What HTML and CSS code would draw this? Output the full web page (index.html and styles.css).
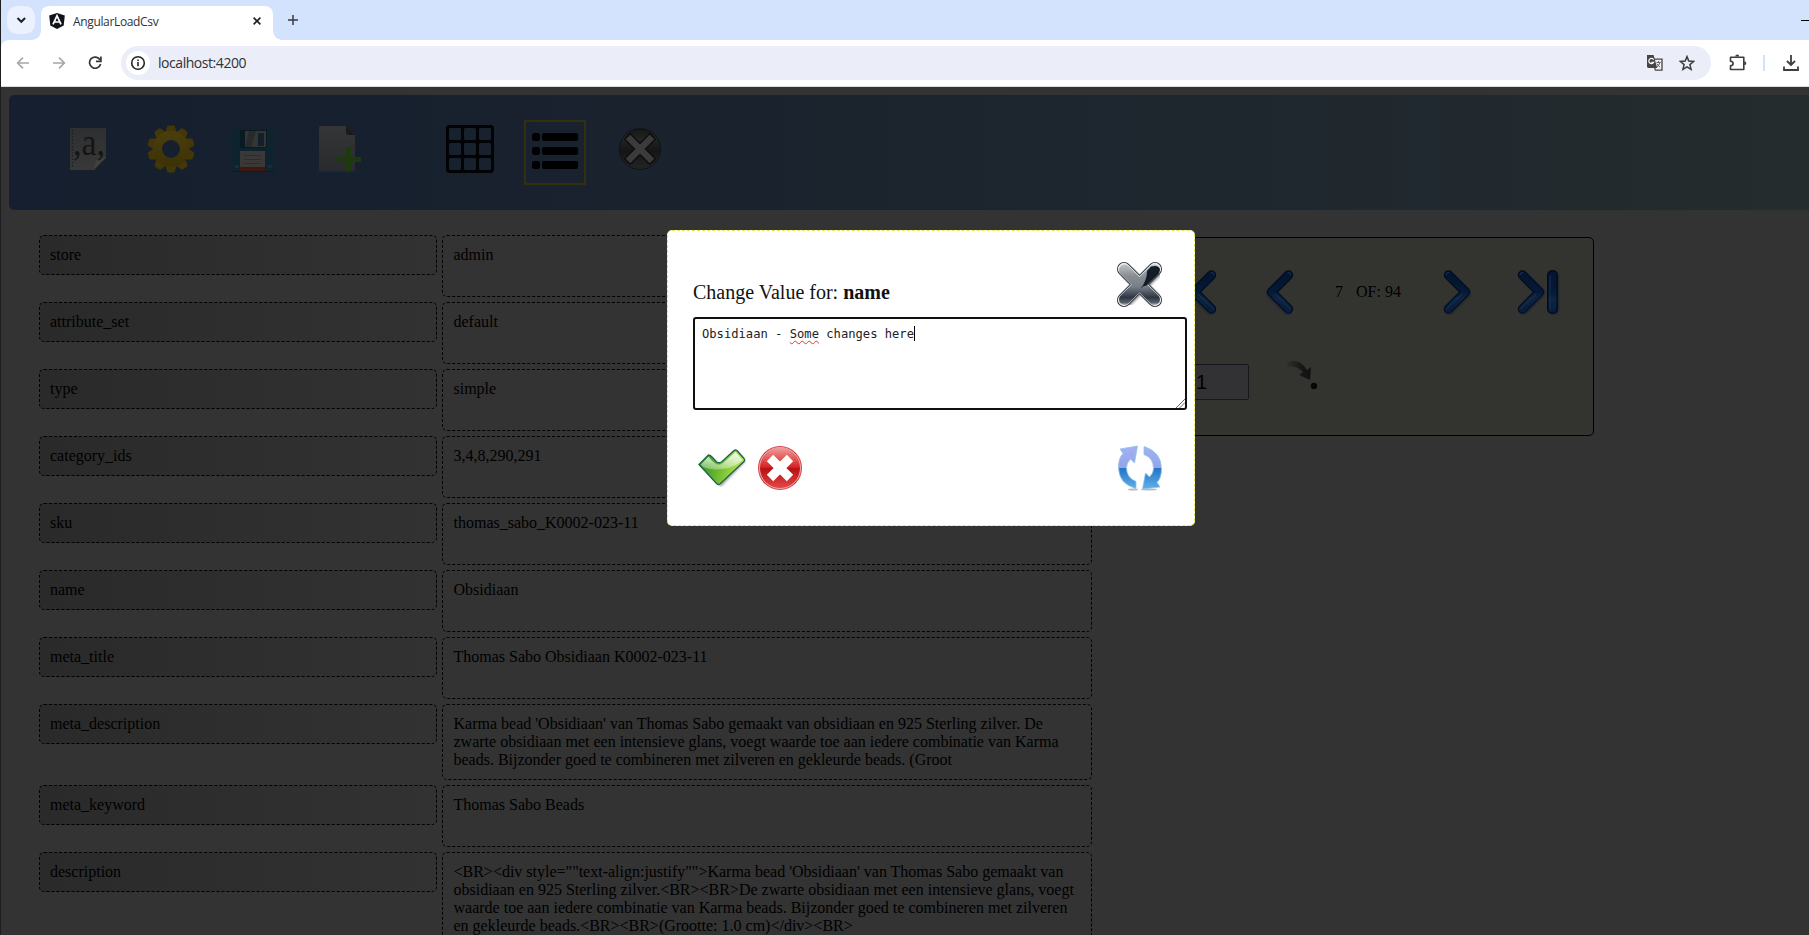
FILE: index.html
```html
<!DOCTYPE html>
<html lang="en">
<head>
<meta charset="utf-8">
<title>AngularLoadCsv</title>
<link rel="stylesheet" href="styles.css">
</head>
<body>
<div class="browser">
  <div class="tabstrip">
    <div class="tab-search"><svg width="28" height="28" viewBox="0 0 28 28"><path d="M10.500 12l3.800 3.800 3.800-3.800" fill="none" stroke="#1f2022" stroke-width="2"/></svg></div>
    <div class="tab">
      <svg class="favicon" width="16" height="16" viewBox="0 0 16 16"><path d="M8 0L15.800 2.400 14.700 12.500 8 16 1.300 12.500 .2 2.400z" fill="#10131c"/><path d="M4 11.400L8 2.800l4 8.600M5.600 9h4.800" fill="none" stroke="#fff" stroke-width="1.700"/></svg>
      <span class="tab-title">AngularLoadCsv</span>
      <svg class="tab-close" width="8" height="8" viewBox="0 0 8 8"><path d="M.6.6l6.800 6.800M7.400.6L.6 7.400" stroke="#1f2022" stroke-width="1.600"/></svg>
    </div>
    <svg class="new-tab" width="10" height="10" viewBox="0 0 10 10"><path d="M5 0v10M0 5h10" stroke="#3a3c40" stroke-width="1.500"/></svg>
    <div class="minimize"></div>
  </div>
  <div class="toolbar">
    <svg class="nav-back" width="14" height="14" viewBox="0 0 14 14"><path d="M13 7H2M7 1.600L1.600 7 7 12.400" fill="none" stroke="#a6a7a9" stroke-width="1.600"/></svg>
    <svg class="nav-fwd" width="14" height="14" viewBox="0 0 14 14"><path d="M1 7h11M7 1.600L12.400 7 7 12.400" fill="none" stroke="#a6a7a9" stroke-width="1.600"/></svg>
    <svg class="nav-reload" width="14" height="14" viewBox="0 0 14 14"><path d="M12 3.800A5.600 5.600 0 1 0 12.600 8" fill="none" stroke="#333538" stroke-width="1.700"/><path d="M12.900.4v5H8" fill="none" stroke="#333538" stroke-width="1.700"/></svg>
    <div class="omnibox">
      <span class="site-info"><svg width="16" height="16" viewBox="0 0 16 16"><circle cx="8" cy="8" r="6.300" fill="none" stroke="#252629" stroke-width="1.600"/><path d="M8 7v4.200M8 4.400v1.700" stroke="#252629" stroke-width="1.600"/></svg></span>
      <span class="url">localhost:4200</span>
      <svg class="translate" width="18" height="18" viewBox="0 0 18 18"><path d="M6 5.200h10v11H9.400z" fill="#f3f4fa" stroke="#444" stroke-width="1.300"/><path d="M1 1h6.600l3.600 13H2.400Q1 14 1 12.600z" fill="#444"/><path d="M7.600 5.600A2.600 2.600 0 1 0 7.700 8.300H5.400" fill="none" stroke="#fff" stroke-width="1.200"/><path d="M10.400 8.400h4.400M12.500 7v1.400M14 8.600q-1 3-3.200 4.400M11 9.600q1 2.400 3 3.600" fill="none" stroke="#555" stroke-width=".9"/></svg>
      <svg class="star" width="16" height="16" viewBox="0 0 16 16"><path d="M8 1.600l1.800 4.500 4.800.4-3.700 3.100 1.200 4.700L8 11.800l-4.100 2.500 1.200-4.700L1.400 6.500l4.800-.4z" fill="none" stroke="#3c3d40" stroke-width="1.500"/></svg>
    </div>
    <svg class="puzzle" width="18" height="18" viewBox="0 0 18 18"><path d="M1.500 3.200h13.300v12.300H1.500v-3.800q2.600-.3 2.600-2.300T1.500 7.200z" fill="none" stroke="#3c3d40" stroke-width="1.600" stroke-linejoin="round"/><path d="M6.200 2.600a2 2 0 0 1 4 0zM15.300 7.300a2 2 0 0 1 0 4z" fill="#3c3d40"/></svg>
    <span class="divider"></span>
    <svg class="download" width="16" height="16" viewBox="0 0 16 16"><path d="M8 0v10M4 6l4 4 4-4M1 11.500V15h14v-3.500" fill="none" stroke="#3c3d40" stroke-width="1.800"/></svg>
  </div>
</div>

<div class="app">
  <div class="header">
    <svg class="ic-csv" width="38" height="44" viewBox="0 0 38 44"><defs><linearGradient id="paper" x2="0" y2="1"><stop stop-color="#2d2f31"/><stop offset="1" stop-color="#383837"/></linearGradient></defs><path d="M1 1h36v30L25 43H1z" fill="url(#paper)"/><path d="M37 30q-7 2-10 3-1 5-3 10z" fill="#41413e"/><path d="M3.500 3v38" stroke="#171b20" stroke-width="1.200" stroke-dasharray="1.200 2"/><text x="4" y="28" textLength="32" lengthAdjust="spacingAndGlyphs" class="csv-glyph">,a,</text></svg>
    <svg class="ic-gear" width="48" height="48" viewBox="-24 -24 48 48"><defs><linearGradient id="gear" x2="0" y2="1"><stop stop-color="#4a3d0c"/><stop offset="1" stop-color="#3e3306"/></linearGradient><path id="tooth" d="M-5.500-17L-3.800-22.600q.4-1 1.400-1H2.400q1 0 1.400 1L5.500-17z"/></defs><g fill="#433708"><use href="#tooth"/><use href="#tooth" transform="rotate(36)"/><use href="#tooth" transform="rotate(72)"/><use href="#tooth" transform="rotate(108)"/><use href="#tooth" transform="rotate(144)"/><use href="#tooth" transform="rotate(180)"/><use href="#tooth" transform="rotate(216)"/><use href="#tooth" transform="rotate(252)"/><use href="#tooth" transform="rotate(288)"/><use href="#tooth" transform="rotate(324)"/></g><circle r="13.500" fill="none" stroke="url(#gear)" stroke-width="9"/></svg>
    <svg class="ic-save" width="42" height="42" viewBox="0 0 42 42"><path d="M1 0h37l4 4v36q0 2-2 2H2q-2 0-2-2V2q0-2 1-2z" fill="#0d232d"/><path d="M8 0h27v18H8z" fill="#0a1a22"/><path d="M13 1h21v16H13z" fill="#343536"/><path d="M17 1h7l-5 16h-6z" fill="#282a2b"/><path d="M26 3h6v13h-6z" fill="#12202a"/><path d="M8 21h25v20H8z" fill="#3b3938"/><path d="M8 37h25v4H8z" fill="#3e1710"/><path d="M12 25.500h17M12 29.500h17M12 33.500h17" stroke="#35241f" stroke-width=".8"/><path d="M3 35h4v3H3zM36 35h4v3h-4z" fill="#172e37"/><path d="M0 41.500h42" stroke="#0a1c24"/></svg>
    <svg class="ic-new" width="46" height="48" viewBox="0 0 46 48"><defs><linearGradient id="sheet" x2="0" y2="1"><stop stop-color="#343536"/><stop offset="1" stop-color="#292b2d"/></linearGradient></defs><ellipse cx="20" cy="46" rx="21" ry="1.500" fill="#202833"/><path d="M4 1h25l9 9v35H2V3q0-2 2-2z" fill="url(#sheet)"/><path d="M29 1l9 9h-6q-3 0-3-3z" fill="#1a1a1b"/><path d="M29 22h5v10h10v5H34v9h-5v-9H19v-5h10z" fill="#1c3a0c"/></svg>
    <svg class="ic-grid" width="48" height="48" viewBox="0 0 48 48"><path fill-rule="evenodd" fill="#020304" d="M2 0h44l2 2v44l-2 2H2l-2-2V2zM4 3h10l1 1v10l-1 1H4l-1-1V4zM19 3h10l1 1v10l-1 1H19l-1-1V4zM34 3h10l1 1v10l-1 1H34l-1-1V4zM4 18h10l1 1v10l-1 1H4l-1-1V19zM19 18h10l1 1v10l-1 1H19l-1-1V19zM34 18h10l1 1v10l-1 1H34l-1-1V19zM4 33h10l1 1v10l-1 1H4l-1-1V34zM19 33h10l1 1v10l-1 1H19l-1-1V34zM34 33h10l1 1v10l-1 1H34l-1-1V34z"/></svg>
    <div class="list-toggle"><svg width="46" height="36" viewBox="0 0 46 36"><rect width="8" height="8" rx="2.500"/><rect y="14" width="8" height="8" rx="2.500"/><rect y="28" width="8" height="8" rx="2.500"/><rect x="10" width="36" height="8" rx="2"/><rect x="10" y="14" width="36" height="8" rx="2"/><rect x="10" y="28" width="36" height="8" rx="2"/></svg></div>
    <svg class="ic-close" width="42" height="42" viewBox="-21 -21 42 42"><defs><linearGradient id="disc" x2="0" y2="1"><stop stop-color="#121517"/><stop offset=".25" stop-color="#242424"/><stop offset=".55" stop-color="#151515"/><stop offset="1" stop-color="#242526"/></linearGradient></defs><circle r="20.500" fill="url(#disc)" stroke="#101416"/><g stroke="#0c0c0c" stroke-width="9"><path d="M-13-13L13 13M13-13L-13 13"/></g><path d="M-12-12L12 12M12-12L-12 12" stroke="#3b3b3b" stroke-width="6.600"/></svg>
  </div>

  <div class="content">
    <div class="rows">
      <div class="label">store</div><div class="value">admin</div>
      <div class="label">attribute_set</div><div class="value">default</div>
      <div class="label">type</div><div class="value">simple</div>
      <div class="label">category_ids</div><div class="value">3,4,8,290,291</div>
      <div class="label">sku</div><div class="value">thomas_sabo_K0002-023-11</div>
      <div class="label">name</div><div class="value">Obsidiaan</div>
      <div class="label">meta_title</div><div class="value">Thomas Sabo Obsidiaan K0002-023-11</div>
      <div class="label">meta_description</div><div class="value">Karma bead 'Obsidiaan' van Thomas Sabo gemaakt van obsidiaan en 925 Sterling zilver. De zwarte obsidiaan met een intensieve glans, voegt waarde toe aan iedere combinatie van Karma beads. Bijzonder goed te combineren met zilveren en gekleurde beads. (Groot</div>
      <div class="label">meta_keyword</div><div class="value">Thomas Sabo Beads</div>
      <div class="label">description</div><div class="value">&lt;BR&gt;&lt;div style=""text-align:justify""&gt;Karma bead 'Obsidiaan' van Thomas Sabo gemaakt van obsidiaan en 925 Sterling zilver.&lt;BR&gt;&lt;BR&gt;De zwarte obsidiaan met een intensieve glans, voegt waarde toe aan iedere combinatie van Karma beads. Bijzonder goed te combineren met zilveren en gekleurde beads.&lt;BR&gt;&lt;BR&gt;(Grootte: 1.0 cm)&lt;/div&gt;&lt;BR&gt;</div>
    </div>

    <div class="pager">
      <svg width="0" height="0" class="defs"><defs>
        <linearGradient id="blue" x2="0" y2="1"><stop stop-color="#03152e"/><stop offset=".5" stop-color="#041a36"/><stop offset=".68" stop-color="#0d2442"/><stop offset="1" stop-color="#081d3a"/></linearGradient>
        <symbol id="chev" viewBox="0 0 28 46"><path d="M5.500 6L22.500 23.500 5.500 40.500" transform="translate(1 1)" fill="none" stroke="#272c30" stroke-width="10" stroke-linecap="round" stroke-linejoin="round"/><path d="M5.500 6L22.500 23 5.500 40" fill="none" stroke="#020b20" stroke-width="9.500" stroke-linecap="round" stroke-linejoin="round"/><path d="M5.500 6L22.500 23 5.500 40" fill="none" stroke="url(#blue)" stroke-width="7" stroke-linecap="round" stroke-linejoin="round"/><path d="M3 6q0-3 3-2.600M3.500 40L19 25" fill="none" stroke="#1b3350" stroke-width="1" stroke-linecap="round"/></symbol>
        <symbol id="last" viewBox="0 0 43 46"><use href="#chev" width="28" height="46"/><rect x="31" y="2" width="11.500" height="44" rx="5.500" fill="#272c30"/><rect x="30" y="1" width="11" height="44" rx="5" fill="#020b20"/><rect x="31.500" y="2.500" width="8" height="41" rx="4" fill="url(#blue)"/><path d="M33 7v33" stroke="#1b3350" stroke-linecap="round"/></symbol>
      </defs></svg>
      <div class="pager-nav">
        <svg class="p-first flip" width="43" height="46"><use href="#last"/></svg>
        <svg class="p-prev flip" width="28" height="46"><use href="#chev"/></svg>
        <span class="p-cur">7</span><span class="p-of">OF: 94</span>
        <svg class="p-next" width="28" height="46"><use href="#chev"/></svg>
        <svg class="p-last" width="43" height="46"><use href="#last"/></svg>
      </div>
      <div class="pager-go">
        <div class="page-input">1</div>
        <svg class="jump" width="34" height="32" viewBox="0 0 34 32"><defs><linearGradient id="arr"><stop stop-color="#2f302b"/><stop offset=".6" stop-color="#171717"/><stop offset="1" stop-color="#111"/></linearGradient></defs><path d="M1 2Q14-2 21 10l4-3-1 13-11-5 4-3Q10 5 1 7z" fill="url(#arr)"/><circle cx="28" cy="26" r="3.200" fill="#060606"/></svg>
      </div>
    </div>
  </div>
</div>

<div class="modal">
  <div class="modal-head">
    <div class="modal-title">Change Value for: <b>name</b></div>
    <svg class="modal-x" width="48" height="48" viewBox="0 0 48 48"><defs><linearGradient id="steel" gradientUnits="userSpaceOnUse" x1="0" y1="2" x2="0" y2="45"><stop stop-color="#c6c8cc"/><stop offset=".3" stop-color="#8a8e94"/><stop offset=".55" stop-color="#787e88"/><stop offset=".8" stop-color="#2d3643"/><stop offset=".92" stop-color="#59616c"/><stop offset="1" stop-color="#d6d8db"/></linearGradient><filter id="soft"><feGaussianBlur stdDeviation="1"/></filter></defs><path d="M8 8L39 39M39 8L8 39" transform="translate(1.500 1.500)" stroke="#999" stroke-width="13" stroke-linecap="round" filter="url(#soft)"/><path d="M8 8L39 39M39 8L8 39" stroke="#27303a" stroke-width="14" stroke-linecap="round"/><path d="M8 8L39 39M39 8L8 39" stroke="#e8eaec" stroke-width="12.300" stroke-linecap="round"/><path d="M8.500 9L38.500 38.500M38.500 9L8.500 38.500" stroke="url(#steel)" stroke-width="11" stroke-linecap="round"/><path d="M35 5.500q8-2 9 3 0 3-3 6L30.500 24.500q-3 0-6 3Q31 20 31 10z" fill="#131c27"/></svg>
  </div>
  <div class="editor"><span>Obsidiaan - </span><span class="misspelt">Some</span><span> changes here</span><span class="caret"></span>
    <svg class="grip" width="9" height="9" viewBox="0 0 9 9"><path d="M0 9L9 0M3.500 9L9 3.500" stroke="#555" stroke-width=".9"/></svg>
  </div>
  <div class="modal-actions">
    <svg class="ok" width="48" height="38" viewBox="0 0 48 38"><defs><linearGradient id="green" x2="1" y2=".2"><stop stop-color="#1d8a20"/><stop offset=".5" stop-color="#68b82d"/><stop offset="1" stop-color="#b4e558"/></linearGradient><linearGradient id="gloss" x2="0" y2="1"><stop stop-color="#fff" stop-opacity=".95"/><stop offset="1" stop-color="#fff" stop-opacity=".3"/></linearGradient></defs><path d="M2 16L11 7l12 9L39 2l9 10-25 26z" fill="#aaa" filter="url(#soft)"/><path d="M1 15.500L10.500 6q2 0 4 2.500l4 4.500q2.500 1.500 5 0L36 1.500q1.500-1 3 0l7 8q1 1.500 0 3L22 35q-1.500 1-3 0z" fill="url(#green)" stroke="#20624a" stroke-width="1.300"/><path d="M2.800 15.500l7.700-7.700q6 7.700 10 8 3 0 5-2L37.500 3l7 8Q36 19 25 20 12 21.500 5 18z" fill="url(#gloss)"/></svg>
    <svg class="cancel" width="46" height="46" viewBox="-23 -23 46 46"><defs><linearGradient id="red" x2="0" y2="1"><stop stop-color="#ee9e9b"/><stop offset=".49" stop-color="#d62022"/><stop offset=".5" stop-color="#b41111"/><stop offset="1" stop-color="#e54748"/></linearGradient></defs><circle r="22" fill="#d94347"/><circle r="20.500" fill="url(#red)" stroke="#eda9a8"/><path d="M-10-10L10 10M10-10L-10 10" stroke="#fff" stroke-width="9"/></svg>
    <svg class="refresh" width="46" height="46" viewBox="-23 -23 46 46"><defs><linearGradient id="sync" gradientUnits="userSpaceOnUse" x1="0" y1="-22" x2="0" y2="22"><stop stop-color="#a6b1f2"/><stop offset=".49" stop-color="#91a5e9"/><stop offset=".5" stop-color="#2473c4"/><stop offset="1" stop-color="#64b3ec"/></linearGradient></defs><ellipse cx="-7" cy="21.500" rx="5" ry="1" fill="#bbb"/><ellipse cx="9" cy="21.500" rx="8" ry="1" fill="#bbb"/><path d="M-4 20.500Q-21.500 16-21.500-1q0-9 4.500-13.500l-3-4.500 17.500-3-3 17-4-4q-4 4-4 8.500 0 10.500 9.500 14z" fill="url(#sync)" stroke="#8fc3ee" stroke-width=".8"/><path d="M4-21.500Q21.500-16 21.500 1q0 9-4.500 13.500l3 4.500-17.500 2 3-16 4 4q4-4 4-8.500 0-10.500-9.500-14z" fill="url(#sync)" stroke="#8fc3ee" stroke-width=".8"/></svg>
  </div>
</div>
</body>
</html>
```

FILE: styles.css
```css
* { box-sizing: border-box; }
svg { display: block; flex: none; }
body {
  margin: 0;
  width: 1809px;
  height: 935px;
  overflow: hidden;
  background: #333;
  color: #000;
  border-left: 1px solid #1f1f21;
  font: 16px/18px "Liberation Serif", serif;
}

/* browser chrome */
.browser {
  height: 87px;
  background: #d3e2fd;
  border-bottom: 1px solid #dcdcdc;
  font-family: "Open Sans", sans-serif;
  color: #303134;
}
.tabstrip { display: flex; height: 40px; padding-top: 6px; }
.tab-search { width: 28px; height: 28px; margin-left: 6px; border-radius: 10px; background: #ebf1fe; }
.tab {
  position: relative;
  display: flex;
  align-items: center;
  width: 232px;
  height: 34px;
  margin-left: 6px;
  padding: 0 12px 5px 8px;
  border-radius: 8px 8px 0 0;
  background: #fff;
}
.tab::before, .tab::after {
  content: "";
  position: absolute;
  bottom: 0;
  width: 9px;
  height: 9px;
}
.tab::before { left: -9px; background: radial-gradient(circle at 0 0, transparent 8.5px, #fff 9px); }
.tab::after { right: -9px; background: radial-gradient(circle at 100% 0, transparent 8.5px, #fff 9px); }
.tab-title { margin: 2px 0 0 8px; font-size: 12px; letter-spacing: -0.35px; white-space: nowrap; }
.tab-close { margin-left: auto; }
.new-tab { margin: 9px 0 0 15px; }
.minimize { width: 8px; height: 1px; margin: 14px 0 0 auto; background: #000; }
.toolbar {
  display: flex;
  align-items: center;
  height: 46px;
  padding-left: 15px;
  border-radius: 8px 0 0 0;
  background: #fff;
}
.nav-fwd { margin-left: 22px; }
.nav-reload { margin-left: 22px; }
.omnibox {
  display: flex;
  align-items: center;
  width: 1590px;
  height: 34px;
  margin-left: 19px;
  padding: 0 16px 0 5px;
  border-radius: 17px;
  background: #ebeef8;
}
.site-info { display: grid; place-items: center; width: 24px; height: 24px; border-radius: 50%; background: #fff; }
.url { margin-left: 8px; font-size: 14px; letter-spacing: -0.45px; white-space: nowrap; }
.translate { margin-left: auto; }
.star { margin-left: 15px; }
.puzzle { margin-left: 18px; }
.divider { width: 2px; height: 16px; margin-left: 16px; background: #d3e2fb; }
.download { margin-left: 18px; }

/* application page */
.app { padding: 8px 0 0 8px; }
.header {
  display: flex;
  align-items: flex-start;
  height: 115px;
  padding-left: 60px;
  border-radius: 5px 0 0 5px;
  background: linear-gradient(90deg, #161f2f 0%, #17202e 20%, #1a232d 40%, #21292f 80%, #242c2d 100%);
}
.csv-glyph { font: 37px "Liberation Serif", serif; fill: #161512; }
.ic-csv { margin-top: 32px; overflow: visible; }
.ic-gear { margin: 30px 0 0 40px; }
.ic-save { margin: 35px 0 0 37px; }
.ic-new { margin: 30px 0 0 43px; }
.ic-grid { margin: 30px 0 0 83px; }
.list-toggle { width: 62px; height: 65px; margin: 25px 0 0 30px; padding: 11px 0 0 6px; border: 2px solid #32300d; }
.ic-close { margin: 33px 0 0 33px; }

.content { display: flex; align-items: flex-start; padding: 25px 0 0 30px; }
.rows { display: grid; grid-template-columns: 398px 650px; gap: 5px; align-items: start; }
.label, .value { padding: 10px; border: 1px dashed #000; border-radius: 5px; }
.label { background: linear-gradient(90deg, #2a2a2a, #323232); }
.value { min-height: 62px; padding-left: 10.5px; padding-right: 9.5px; }

.pager {
  width: 482px;
  height: 199px;
  margin: 2px 0 0 20px;
  border: 1px solid #000;
  border-radius: 5px;
  background: #33342f;
}
.defs { position: absolute; }
.pager-nav { display: flex; align-items: center; padding: 31px 0 0 61px; }
.flip { transform: scaleX(-1); }
.p-prev { margin-left: 49px; }
.p-cur { width: 8px; margin-left: 41px; }
.p-of { width: 47px; margin-left: 13px; white-space: nowrap; }
.p-next { margin-left: 40px; }
.p-last { margin-left: 46px; }
.pager-go { display: flex; align-items: flex-start; padding: 49px 0 0 52px; }
.page-input {
  width: 84px;
  height: 36px;
  padding: 0 0 0 30px;
  border: 1px solid #17181b;
  border-radius: 2px;
  background: #323235;
  font: 20px/34px "Liberation Sans", sans-serif;
}
.jump { margin: -4px 0 0 37px; }

/* dialog floating over the dimmed page */
.modal {
  position: absolute;
  left: 667px;
  top: 230px;
  width: 528px;
  height: 296px;
  padding: 0 7px 0 25px;
  border: 1px dashed #e9e94b;
  border-radius: 5px;
  background: #fff;
}
.modal-head { display: flex; justify-content: space-between; height: 86px; padding-right: 23px; }
.modal-title { margin-top: 49px; font-size: 20px; line-height: 24px; color: #111; }
.modal-x { margin-top: 30px; }
.editor {
  position: relative;
  width: 494px;
  height: 93px;
  padding: 7px;
  border: 2px solid #101010;
  border-radius: 3px;
  font: 12.15px/16px "DejaVu Sans Mono", monospace;
  color: #222;
  white-space: pre;
  display: flex;
  align-items: flex-start;
}
.misspelt { text-decoration: underline wavy #d93a3a 1px; text-underline-offset: 2px; }
.caret { width: 1px; height: 15px; background: #000; }
.grip { position: absolute; right: 0; bottom: 0; }
.modal-actions { display: flex; align-items: flex-start; padding: 35px 24px 0 5px; }
.ok { margin-top: 4px; }
.cancel { margin-left: 11px; }
.refresh { margin-left: auto; }
```
